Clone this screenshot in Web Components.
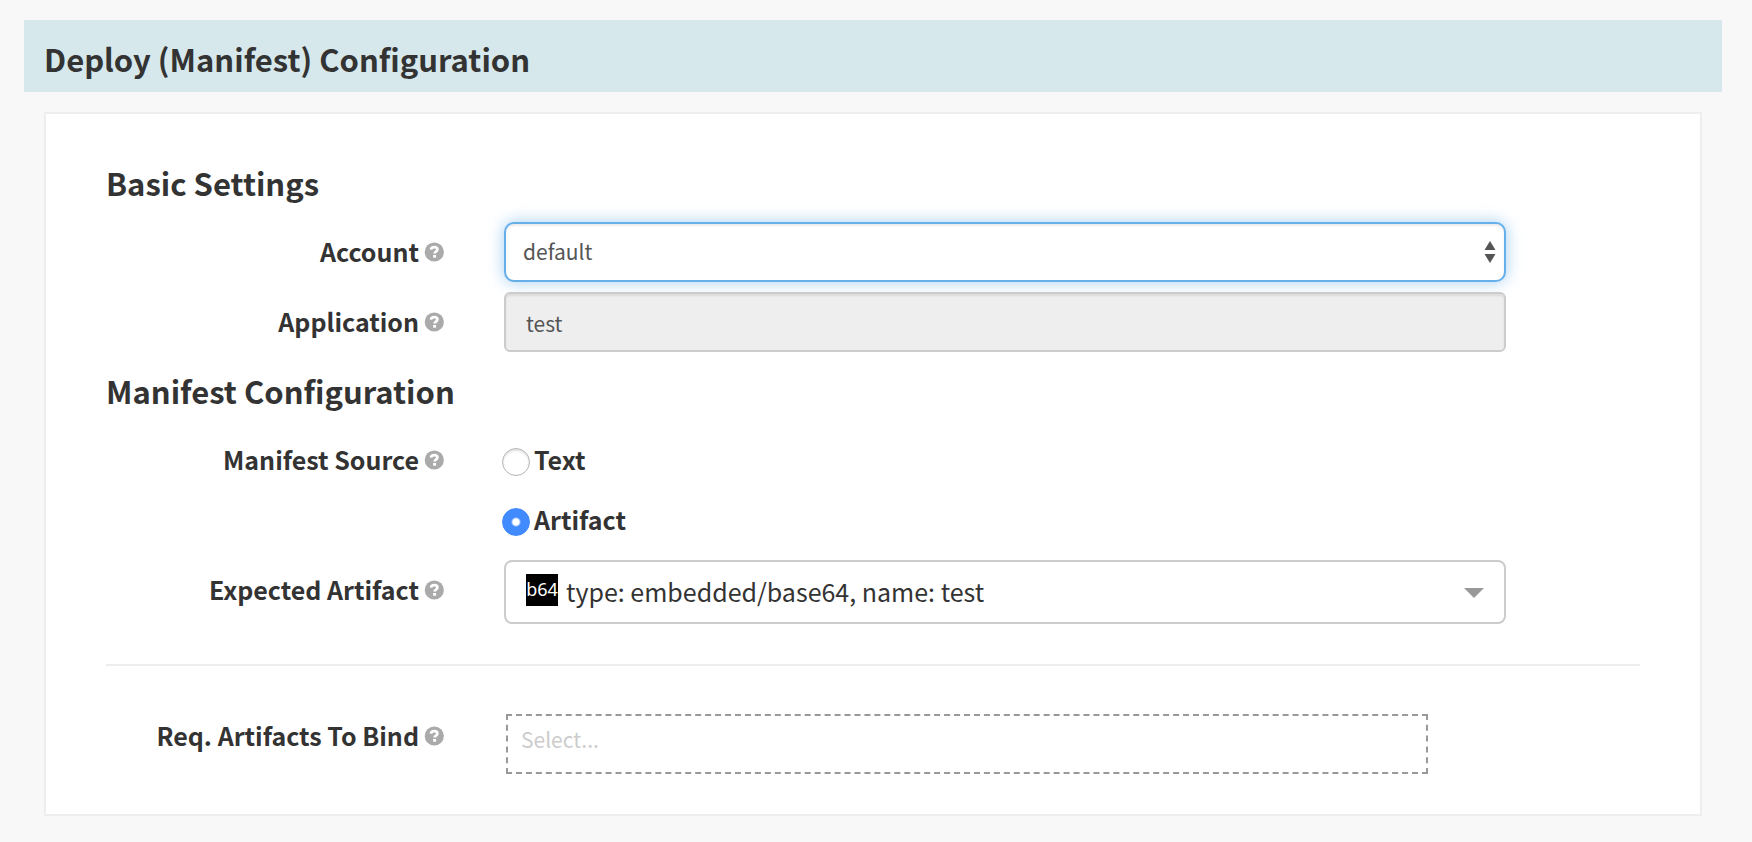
<!DOCTYPE html>
<html lang="en">
<head>
<meta charset="utf-8">
<meta name="viewport" content="width=device-width, initial-scale=1">
<title>Deploy (Manifest) Configuration</title>
<style>
  body {
    margin: 0;
    background: #f8f8f8;
    color: #333;
    font-family: "Noto Sans CJK SC", "Noto Sans", sans-serif;
  }
</style>
</head>
<body>
<stage-config heading="Deploy (Manifest) Configuration">
  <config-section heading="Basic Settings">
    <select-field label="Account" value="default"></select-field>
    <text-field label="Application" value="test"></text-field>
  </config-section>
  <config-section heading="Manifest Configuration">
    <radio-field label="Manifest Source" options="Text,Artifact" value="Artifact"></radio-field>
    <artifact-field label="Expected Artifact" kind="b64" value="type: embedded/base64, name: test"></artifact-field>
  </config-section>
  <section-rule></section-rule>
  <bind-field label="Req. Artifacts To Bind" placeholder="Select..."></bind-field>
</stage-config>

<script>
class StageConfig extends HTMLElement {
  constructor() {
    super();
    this.attachShadow({ mode: 'open' }).innerHTML = `
      <style>
        :host { display: block; padding: 20px 30px 26px 24px; }
        h1 {
          margin: 0; padding: 17px 20px 11px; background: #d6e8ec;
          font-size: 31px; line-height: 44px; font-weight: 700;
        }
        main {
          margin: 20px 20px 0; padding: 30px 60px 40px;
          background: #fff; border: 2px solid #eee;
        }
      </style>
      <h1></h1>
      <main><slot></slot></main>`;
  }
  connectedCallback() {
    this.shadowRoot.querySelector('h1').textContent = this.getAttribute('heading');
  }
}
customElements.define('stage-config', StageConfig);

class ConfigSection extends HTMLElement {
  constructor() {
    super();
    this.attachShadow({ mode: 'open' }).innerHTML = `
      <style>
        :host { display: block; }
        h2 { margin: 17px 0; font-size: 31px; line-height: 44px; font-weight: 700; }
        div { display: grid; gap: 10px; }
      </style>
      <h2></h2>
      <div><slot></slot></div>`;
  }
  connectedCallback() {
    this.shadowRoot.querySelector('h2').textContent = this.getAttribute('heading');
  }
}
customElements.define('config-section', ConfigSection);

class SectionRule extends HTMLElement {
  constructor() {
    super();
    this.attachShadow({ mode: 'open' }).innerHTML = `
      <style>
        :host { display: block; margin: 40px 0; }
        hr { margin: 0; border: 0; border-top: 2px solid #eee; }
      </style>
      <hr>`;
  }
}
customElements.define('section-rule', SectionRule);

class HelpIcon extends HTMLElement {
  constructor() {
    super();
    this.attachShadow({ mode: 'open' }).innerHTML = `
      <style>
        :host { display: block; width: 20px; height: 20px; }
        svg { display: block; width: 100%; height: 100%; }
      </style>
      <svg viewBox="0 0 20 20" aria-hidden="true">
        <circle cx="10.300" cy="10" r="9.600" fill="#aaa"/>
        <path d="M7 7.600C7.200 5.800 8.500 5.100 10.200 5.100c1.800 0 3.200.8 3.200 2.400 0 2.200-2.800 2-2.800 4" fill="none" stroke="#fff" stroke-width="2.700"/>
        <rect x="9.100" y="13" width="3" height="2.700" fill="#fff"/>
      </svg>`;
  }
}
customElements.define('help-icon', HelpIcon);

/* A labelled row: label column, control column, free space. */
class FieldRow extends HTMLElement {
  connectedCallback() {
    if (this.shadowRoot) return;
    this.attachShadow({ mode: 'open' }).innerHTML = `
      <style>
        :host {
          display: grid; grid-template-columns: 169fr 501fr 37fr; column-gap: 60px;
          align-items: start;
        }
        * { box-sizing: border-box; }
        .name {
          display: flex; justify-content: flex-end; align-items: center; gap: 5px;
          height: 60px; font-size: 25px; font-weight: 700; white-space: nowrap;
        }
        .name > :first-child { padding-bottom: 2px; }
        .control { position: relative; min-width: 0; }
        select, input { font-family: inherit; margin: 0; }
        select, input:not([type=radio]) {
          display: block; width: 100%; height: 60px; border: 2px solid #ccc;
          appearance: none; outline: 0; background: #fff; color: #555; font-size: 21px;
        }
        ${this.css()}
      </style>
      <div class="name">${this.nameMarkup(this.getAttribute('label'))}<help-icon></help-icon></div>
      <div class="control">${this.control()}</div>`;
  }
  nameMarkup(text) { return `<label for="control">${text}</label>`; }
}

class SelectField extends FieldRow {
  css() {
    return `
      select {
        padding: 0 36px 2px 17px; border-color: #66afe9; border-radius: 10px;
        box-shadow: inset 0 2px 2px rgba(0,0,0,.075), 0 0 16px rgba(102,175,233,.6);
      }
      svg { position: absolute; right: 10px; top: 19px; width: 12px; height: 22px; pointer-events: none; }`;
  }
  control() {
    return `
      <select id="control"><option>${this.getAttribute('value')}</option></select>
      <svg viewBox="0 0 12 22" fill="#555" aria-hidden="true"><path d="M6 0l5.500 9H.5zM.5 13h11L6 22z"/></svg>`;
  }
}
customElements.define('select-field', SelectField);

class TextField extends FieldRow {
  css() {
    return `
      input:not([type=radio]) {
        padding: 2px 20px 0; border-radius: 6px; background: #eee;
        box-shadow: inset 0 2px 2px rgba(0,0,0,.075);
      }`;
  }
  control() {
    return `<input id="control" type="text" value="${this.getAttribute('value')}" readonly>`;
  }
}
customElements.define('text-field', TextField);

class RadioField extends FieldRow {
  css() {
    return `
      .control { margin-left: -2px; }
      .option {
        display: flex; align-items: center; gap: 4px; width: max-content;
        height: 60px; font-size: 25px; font-weight: 700;
      }
      .option span { padding-bottom: 2px; }
      input {
        appearance: none; flex: none; width: 28px; height: 28px; margin-top: 4px;
        border: 1px solid #b4b4b4; border-radius: 50%; background: #fff;
        box-shadow: inset 0 2px 2px rgba(0,0,0,.12);
      }
      input:checked {
        border-color: #3f87fb; box-shadow: none;
        background: radial-gradient(circle, #fff 3px, #428bff 5px);
      }`;
  }
  nameMarkup(text) { return `<span id="name">${text}</span>`; }
  control() {
    const chosen = this.getAttribute('value');
    const options = this.getAttribute('options').split(',').map(o => `
      <label class="option"><input type="radio" name="source" value="${o}"${o === chosen ? ' checked' : ''}><span>${o}</span></label>`);
    return `<div role="radiogroup" aria-labelledby="name">${options.join('')}</div>`;
  }
}
customElements.define('radio-field', RadioField);

class ArtifactField extends FieldRow {
  css() {
    return `
      select {
        height: 64px; padding: 0 60px 2px; border-radius: 8px; color: #333; font-size: 25px;
      }
      .kind {
        position: absolute; left: 22px; top: 14px; width: 32px; height: 32px;
        background: #000; color: #fff; text-align: center; pointer-events: none;
        font: 18px/31px "Noto Sans", sans-serif;
      }
      svg { position: absolute; right: 22px; top: 28px; width: 20px; height: 10px; pointer-events: none; }`;
  }
  control() {
    return `
      <select id="control"><option>${this.getAttribute('value')}</option></select>
      <span class="kind">${this.getAttribute('kind')}</span>
      <svg viewBox="0 0 20 10" fill="#999" aria-hidden="true"><path d="M0 0h20L10 10z"/></svg>`;
  }
}
customElements.define('artifact-field', ArtifactField);

class BindField extends FieldRow {
  css() {
    return `
      .control { padding: 8px 78px 0 2px; }
      input:not([type=radio]) { padding: 0 13px 10px; border: 2px dashed #999; }
      input::placeholder { color: #ccc; opacity: 1; }`;
  }
  control() {
    return `<input id="control" type="text" placeholder="${this.getAttribute('placeholder')}">`;
  }
}
customElements.define('bind-field', BindField);
</script>
</body>
</html>
